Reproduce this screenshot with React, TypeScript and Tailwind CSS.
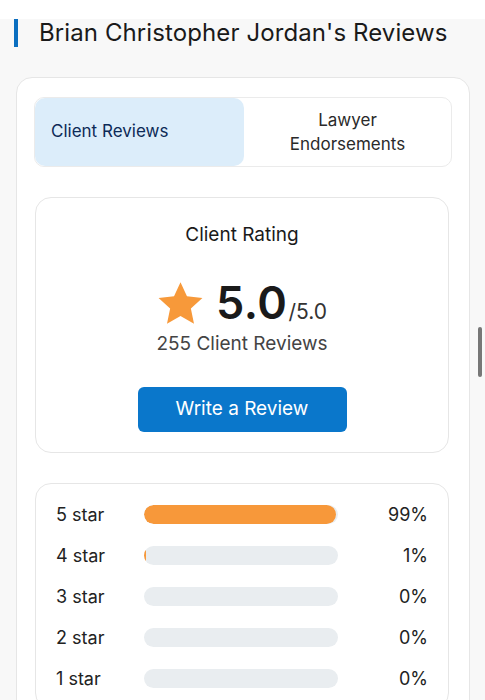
import { Fragment } from 'react'

const rows = [
  { label: '5 star', pct: 99 },
  { label: '4 star', pct: 1 },
  { label: '3 star', pct: 0 },
  { label: '2 star', pct: 0 },
  { label: '1 star', pct: 0 },
]

function Star() {
  return (
    <svg width="47" height="45" viewBox="0 0 24 23" className="shrink-0">
      <path
        d="M12 0.6l3.3 7.2 7.9 0.9-5.9 5.4 1.6 7.8L12 17.9l-6.9 4 1.6-7.8L0.8 8.7l7.9-0.9z"
        fill="#f7993a"
      />
    </svg>
  )
}

export default function App() {
  return (
    <div
      className="relative min-h-[700px] bg-[#f8f8f8] text-[#1c1c1c]"
      style={{ fontFamily: 'Inter, "Noto Sans", sans-serif' }}
    >
      <div className="h-[19px] bg-white" />

      {/* Heading */}
      <div className="flex items-center pl-[14px] gap-[21px]">
        <div className="w-[4px] h-[28px] bg-[#0b6fc0]" />
        <h1 className="text-[24px] leading-[28px] text-[#1a1a1a] tracking-[0.1px]">
          Brian Christopher Jordan's Reviews
        </h1>
      </div>

      {/* Reviews card */}
      <div className="mt-[30px] ml-[16px] w-[454px] rounded-[16px] border border-[#e6e6e6] bg-white px-[17px] pt-[19px] pb-[20px]">
        <div className="flex h-[70px] rounded-[10px] border border-[#ebebeb] bg-white">
          <div className="flex w-[209px] items-center rounded-[10px] bg-[#dcedfa] pl-[16px] text-[17px] text-[#0d2a57]">
            Client Reviews
          </div>
          <div className="flex flex-1 items-center justify-center text-center text-[17px] leading-[24px] text-[#2a2a2a]">
            Lawyer
            <br />
            Endorsements
          </div>
        </div>

        {/* Rating */}
        <div className="mt-[30px] ml-[1px] mr-[3px] flex flex-col items-center rounded-[16px] border border-[#e6e6e6] pt-[24px] pb-[20px]">
          <div className="text-[19px] leading-[26px] text-[#1a1a1a]">Client Rating</div>
          <div className="mt-[30px] flex items-center">
            <Star />
            <div className="ml-[12px] flex items-baseline">
              <span className="text-[45px] leading-[50px] font-semibold text-[#1a1a1a] tracking-[0.5px]">5.0</span>
              <span className="ml-[1px] text-[21px] text-[#333]">/5.0</span>
            </div>
          </div>
          <div className="mt-[4px] text-[19px] leading-[24px] text-[#444]">255 Client Reviews</div>
          <button className="mt-[31px] h-[45px] w-[209px] rounded-[6px] bg-[#0a77cb] text-[19px] text-white">
            Write a Review
          </button>
        </div>

        {/* Distribution */}
        <div className="mt-[30px] ml-[1px] mr-[3px] rounded-[16px] border border-[#e6e6e6] px-[20px] pt-[21px] pb-[20px]">
          <div className="grid grid-cols-[88px_194px_1fr] items-center gap-y-[22px]">
            {rows.map((r) => (
              <Fragment key={r.label}>
                <div className="text-[18px] leading-[19px] text-[#222]">{r.label}</div>
                <div className="h-[19px] overflow-hidden rounded-full bg-[#e9edf0]">
                  <div className="h-full rounded-full bg-[#f7983a]" style={{ width: `${r.pct}%` }} />
                </div>
                <div className="text-right text-[18px] leading-[19px] text-[#222]">{r.pct}%</div>
              </Fragment>
            ))}
          </div>
        </div>
      </div>

      {/* Scrollbar */}
      <div className="absolute right-[3px] top-[327px] h-[50px] w-[4px] rounded-full bg-[#777]" />
    </div>
  )
}
